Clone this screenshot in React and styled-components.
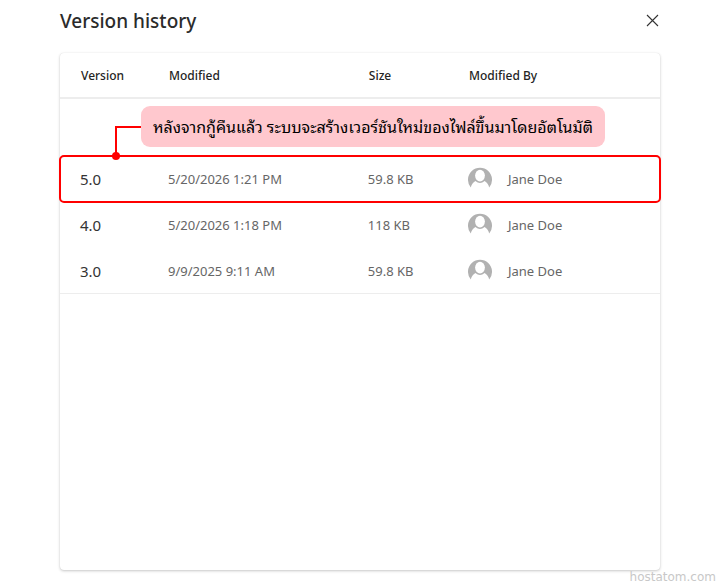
import React from 'react'
import styled, { createGlobalStyle } from 'styled-components'

const versions = [
  { version: '5.0', modified: '5/20/2026 1:21 PM', size: '59.8 KB', user: 'Jane Doe', restored: true },
  { version: '4.0', modified: '5/20/2026 1:18 PM', size: '118 KB', user: 'Jane Doe' },
  { version: '3.0', modified: '9/9/2025 9:11 AM', size: '59.8 KB', user: 'Jane Doe' },
]

const Avatar = () => (
  <AvatarIcon viewBox="0 0 24 24" aria-hidden="true">
    <path fill="#b1b1b1" d="M2.8 20.5A12 12 0 1 1 21.2 20.5C20.6 17.6 19 15.4 16.6 14Q12 18 7.4 14C5 15.4 3.4 17.6 2.8 20.5Z" />
    <ellipse cx="12" cy="8.6" rx="4.9" ry="5.8" fill="#fff" />
  </AvatarIcon>
)

const App = () => {
  return (
    <>
      <GlobalStyle />
      <Page>
        <Header>
          <Title>Version history</Title>
          <CloseButton type="button" aria-label="Close">
            <svg width="14" height="14" viewBox="0 0 14 14" aria-hidden="true">
              <path d="M1 1L12 12M12 1L1 12" stroke="#333" strokeWidth="1.1" />
            </svg>
          </CloseButton>
        </Header>
        <Card>
          <Table>
            <thead>
              <tr>
                <HeadCell $width="18%">Version</HeadCell>
                <HeadCell $width="33.3%">Modified</HeadCell>
                <HeadCell $width="16.7%">Size</HeadCell>
                <HeadCell $width="32%">Modified By</HeadCell>
              </tr>
            </thead>
            <tbody>
              <tr>
                <NoteCell colSpan={4}>
                  <Note>
                    หลังจากกู้คืนแล้ว ระบบจะสร้างเวอร์ชันใหม่ของไฟล์ขึ้นมาโดยอัตโนมัติ
                    <Connector />
                  </Note>
                </NoteCell>
              </tr>
              {versions.map((item) => (
                <Row key={item.version} $restored={item.restored}>
                  <Cell $strong>{item.version}</Cell>
                  <Cell>{item.modified}</Cell>
                  <Cell>{item.size}</Cell>
                  <Cell>
                    <User>
                      <Avatar />
                      {item.user}
                    </User>
                  </Cell>
                </Row>
              ))}
            </tbody>
          </Table>
        </Card>
        <Watermark>hostatom.com</Watermark>
      </Page>
    </>
  )
}

const GlobalStyle = createGlobalStyle`
  *, *::before, *::after {
    box-sizing: border-box;
  }
  body {
    margin: 0;
    background: #fff;
    font-family: "Noto Sans", "Open Sans", sans-serif;
  }
`

const Page = styled.main`
  display: flex;
  flex-direction: column;
  min-height: 100vh;
  padding: 0 60px;
`

const Header = styled.header`
  display: flex;
  align-items: center;
  justify-content: space-between;
  height: 42px;
  margin-bottom: 11px;
`

const Title = styled.h1`
  margin: 0;
  color: #2b2b2b;
  font-size: 19px;
  font-weight: 500;
  line-height: 28px;
`

const CloseButton = styled.button`
  display: flex;
  padding: 0;
  border: 0;
  background: none;
  cursor: pointer;
`

const Card = styled.section`
  flex: 1;
  border-radius: 4px;
  background: #fff;
  box-shadow: 0 1px 3px rgba(0, 0, 0, 0.22), 0 0 1px rgba(0, 0, 0, 0.1);
`

const Table = styled.table`
  width: 100%;
  table-layout: fixed;
  border-collapse: separate;
  border-spacing: 0;
`

const HeadCell = styled.th`
  width: ${({ $width }) => $width};
  height: 46px;
  padding: 0 0 0 1px;
  border-bottom: 2px solid #ededed;
  color: #242424;
  font-size: 12px;
  font-weight: 500;
  text-align: left;

  &:first-child {
    padding-left: 21px;
  }
`

const NoteCell = styled.td`
  height: 57px;
  padding: 0 20px 2px 81px;
`

const Note = styled.div`
  position: relative;
  width: fit-content;
  padding: 8px 12px;
  border-radius: 9px;
  background: #ffc8ce;
  color: #000;
  font-family: "Noto Sans Thai Looped", "Noto Looped Thai", "Loma", "Waree", "Garuda", "Noto Sans Thai", sans-serif;
  font-size: 16px;
  line-height: 25px;
  white-space: nowrap;
`

// line from the note down to the restored row
const Connector = styled.span`
  position: absolute;
  top: 20px;
  right: 100%;
  width: 26px;
  height: 30px;
  border-top: 2px solid #f00;
  border-left: 2px solid #f00;

  &::after {
    content: '';
    position: absolute;
    bottom: -4px;
    left: -5px;
    width: 8px;
    height: 8px;
    border-radius: 50%;
    background: #f00;
  }
`

const Row = styled.tr`
  border-radius: 4px;
  outline: ${({ $restored }) => ($restored ? '2px solid #f00' : 'none')};
  outline-offset: -1px;

  &:last-child td {
    border-bottom: 1px solid #ededed;
  }
`

const Cell = styled.td`
  height: 46px;
  padding: 0;
  color: ${({ $strong }) => ($strong ? '#333' : '#666')};
  font-size: ${({ $strong }) => ($strong ? '15px' : '13px')};

  &:first-child {
    padding-left: 20px;
  }
`

const User = styled.div`
  display: flex;
  align-items: center;
  gap: 16px;
`

const AvatarIcon = styled.svg`
  width: 24px;
  height: 24px;
`

const Watermark = styled.footer`
  height: 14px;
  margin-right: -56px;
  color: #c8c8c8;
  font-family: "DejaVu Sans", sans-serif;
  font-size: 12px;
  line-height: 14px;
  text-align: right;
`

export default App
